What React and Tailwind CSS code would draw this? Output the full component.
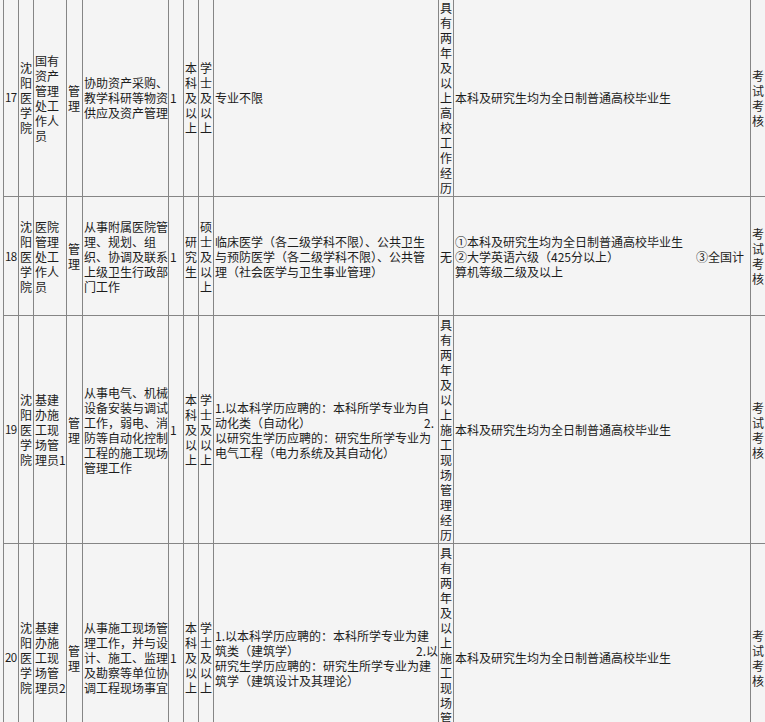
const rows = [
  {
    no: "17",
    unit: "沈阳医学院",
    post: ["国有", "资产", "管理", "处工", "作人", "员"],
    type: "管理",
    duty: ["协助资产采购、", "教学科研等物资", "供应及资产管理"],
    num: "1",
    edu: "本科及以上",
    deg: "学士及以上",
    major: [{ l: "专业不限" }],
    exp: "具有两年及以上高校工作经历",
    other: [{ l: "本科及研究生均为全日制普通高校毕业生" }],
    exam: "考试考核",
  },
  {
    no: "18",
    unit: "沈阳医学院",
    post: ["医院", "管理", "处工", "作人", "员"],
    type: "管理",
    duty: ["从事附属医院管", "理、规划、组", "织、协调及联系", "上级卫生行政部", "门工作"],
    num: "1",
    edu: "研究生",
    deg: "硕士及以上",
    major: [
      { l: "临床医学（各二级学科不限）、公共卫生" },
      { l: "与预防医学（各二级学科不限）、公共管" },
      { l: "理（社会医学与卫生事业管理）" },
    ],
    exp: "无",
    other: [
      { l: "①本科及研究生均为全日制普通高校毕业生" },
      { l: "②大学英语六级（425分以上）", r: "③全国计", pr: "pr-[6px]" },
      { l: "算机等级二级及以上" },
    ],
    exam: "考试考核",
  },
  {
    no: "19",
    unit: "沈阳医学院",
    post: ["基建", "办施", "工现", "场管", "理员1"],
    type: "管理",
    duty: ["从事电气、机械", "设备安装与调试", "工作，弱电、消", "防等自动化控制", "工程的施工现场", "管理工作"],
    num: "1",
    edu: "本科及以上",
    deg: "学士及以上",
    major: [
      { l: "1.以本科学历应聘的：本科所学专业为自" },
      { l: "动化类（自动化）", r: "2.", pr: "pr-[4px]" },
      { l: "以研究生学历应聘的：研究生所学专业为" },
      { l: "电气工程（电力系统及其自动化）" },
    ],
    exp: "具有两年及以上施工现场管理经历",
    other: [{ l: "本科及研究生均为全日制普通高校毕业生" }],
    exam: "考试考核",
  },
  {
    no: "20",
    unit: "沈阳医学院",
    post: ["基建", "办施", "工现", "场管", "理员2"],
    type: "管理",
    duty: ["从事施工现场管", "理工作，并与设", "计、施工、监理", "及勘察等单位协", "调工程现场事宜"],
    num: "1",
    edu: "本科及以上",
    deg: "学士及以上",
    major: [
      { l: "1.以本科学历应聘的：本科所学专业为建" },
      { l: "筑类（建筑学）", r: "2.以", pr: "pr-0" },
      { l: "研究生学历应聘的：研究生所学专业为建" },
      { l: "筑学（建筑设计及其理论）" },
    ],
    exp: "具有两年及以上施工现场管理经历",
    other: [{ l: "本科及研究生均为全日制普通高校毕业生" }],
    exam: "考试考核",
  },
];

function Cell({ children, last }) {
  return (
    <div
      className={
        "flex items-center border-l border-t border-[#858585] pl-[1px] overflow-hidden " +
        (last ? "border-r" : "")
      }
    >
      {children}
    </div>
  );
}

function Vert({ text }) {
  return (
    <div className="flex flex-col">
      {[...text].map((c, i) => (
        <span key={i}>{c}</span>
      ))}
    </div>
  );
}

function Lines({ lines }) {
  return (
    <div className="flex flex-col w-full">
      {lines.map((ln, i) =>
        ln.r ? (
          <div key={i} className={"flex justify-between whitespace-nowrap " + ln.pr}>
            <span>{ln.l}</span>
            <span>{ln.r}</span>
          </div>
        ) : (
          <span key={i} className="whitespace-nowrap">
            {ln.l}
          </span>
        )
      )}
    </div>
  );
}

export default function App() {
  return (
    <div
      className="w-screen h-screen overflow-hidden bg-[#f4f4f4] text-[#1c1c1c] text-[12px] leading-[15px]"
      style={{ fontFamily: '"Noto Sans CJK SC", "Liberation Sans", sans-serif' }}
    >
      <div className="ml-[3px] -mt-[2px] grid w-[780px] grid-cols-[15px_15px_33px_16px_86px_15px_15px_15px_225px_15px_297px_30px] grid-rows-[198px_119px_228px_228px]">
        {rows.map((r) => (
          <div key={r.no} className="contents">
            <Cell>
              <span className="tracking-[-0.6px] text-[11.5px]">{r.no}</span>
            </Cell>
            <Cell>
              <Vert text={r.unit} />
            </Cell>
            <Cell>
              <Lines lines={r.post.map((l) => ({ l }))} />
            </Cell>
            <Cell>
              <Vert text={r.type} />
            </Cell>
            <Cell>
              <Lines lines={r.duty.map((l) => ({ l }))} />
            </Cell>
            <Cell>
              <span>{r.num}</span>
            </Cell>
            <Cell>
              <Vert text={r.edu} />
            </Cell>
            <Cell>
              <Vert text={r.deg} />
            </Cell>
            <Cell>
              <Lines lines={r.major} />
            </Cell>
            <Cell>
              <Vert text={r.exp} />
            </Cell>
            <Cell>
              <Lines lines={r.other} />
            </Cell>
            <Cell last>
              <Vert text={r.exam} />
            </Cell>
          </div>
        ))}
      </div>
    </div>
  );
}
